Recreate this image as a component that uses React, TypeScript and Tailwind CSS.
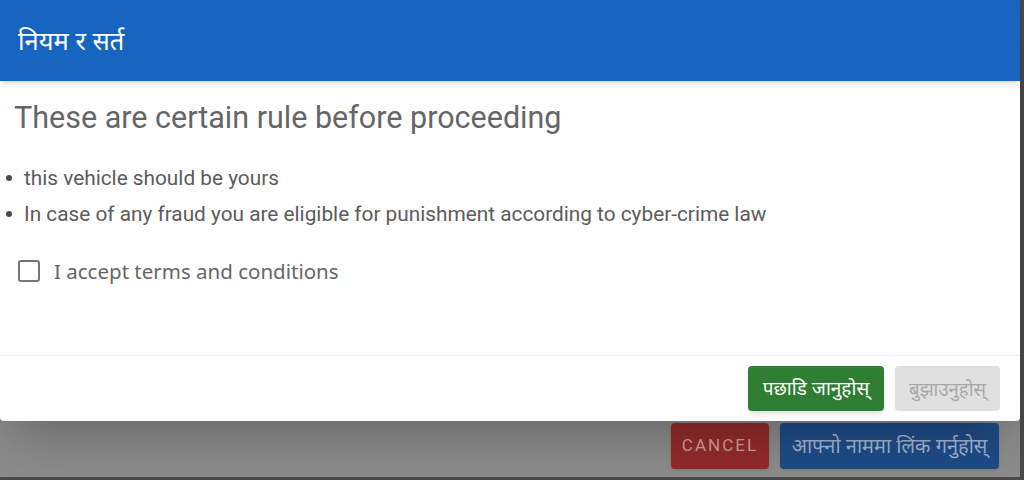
import { useState } from "react";

const rules = [
  "this vehicle should be yours",
  "In case of any fraud you are eligible for punishment according to cyber-crime law",
];

export default function App() {
  const [accepted, setAccepted] = useState(false);

  return (
    <div className="relative flex h-[480px] w-[1024px] overflow-hidden bg-[#4a4a4a] font-['Roboto',sans-serif]">
      <div className="relative flex h-[477px] w-[1020px] flex-col justify-end bg-gradient-to-b from-[#6a6a6a] via-[#828282] to-[#8c8c8c]">
        {/* page behind the overlay */}
        <div className="flex justify-end gap-[11px] pb-[8px] pr-[21px]">
          <button
            type="button"
            className="flex h-[46px] w-[98px] items-center justify-center rounded-[4px] bg-[#922a2a] text-[17px] tracking-[0.12em] text-[#d49a9a] shadow"
          >
            CANCEL
          </button>
          <button
            type="button"
            className="flex h-[46px] w-[219px] items-center justify-center rounded-[4px] bg-[#1e4b86] font-['Noto_Sans',sans-serif] text-[20px] text-[#9fb3cf] shadow"
          >
            आफ्नो नाममा लिंक गर्नुहोस्
          </button>
        </div>

        {/* dialog */}
        <div className="absolute left-0 top-0 flex h-[421px] w-[1020px] flex-col rounded-b-[4px] bg-white shadow-2xl">
          <div className="relative z-10 flex h-[81px] items-center bg-[#1565c0] pl-[18px] shadow-md">
            <h2 className="font-['Noto_Sans',sans-serif] text-[25.5px] text-white">
              नियम र सर्त
            </h2>
          </div>

          <div className="flex-1 px-[14px] pt-[19px]">
            <h1 className="text-[30.5px] leading-[36px] text-[#666666]">
              These are certain rule before proceeding
            </h1>
            <ul className="mt-[30px] flex flex-col gap-[12px]">
              {rules.map((r) => (
                <li
                  key={r}
                  className="flex items-center text-[20.8px] leading-[24px] text-[#5c5c5c]"
                >
                  <span className="-ml-[8px] mr-[12px] h-[6px] w-[6px] rounded-full bg-[#4a4a4a]" />
                  {r}
                </li>
              ))}
            </ul>
            <label className="ml-[4px] mt-[30px] flex cursor-pointer items-center gap-[14px]">
              <span
                onClick={() => setAccepted(!accepted)}
                className={`h-[22px] w-[22px] rounded-[3px] border-2 ${
                  accepted ? "border-[#1565c0] bg-[#1565c0]" : "border-[#767676]"
                }`}
              />
              <span className="font-['Noto_Sans',sans-serif] text-[20.5px] text-[#666666]">
                I accept terms and conditions
              </span>
            </label>
          </div>

          <div className="flex h-[66px] items-start justify-end gap-[11px] border-t border-[#eeeeee] pr-[20px] pt-[10px]">
            <button
              type="button"
              className="flex h-[45px] w-[136px] items-center justify-center rounded-[4px] bg-[#2e7d32] font-['Noto_Sans',sans-serif] text-[19px] text-white shadow-md"
            >
              पछाडि जानुहोस्
            </button>
            <button
              type="button"
              disabled={!accepted}
              className="flex h-[45px] w-[105px] items-center justify-center rounded-[4px] bg-[#e0e0e0] font-['Noto_Sans',sans-serif] text-[18.5px] text-[#a8a8a8]"
            >
              बुझाउनुहोस्
            </button>
          </div>
        </div>
      </div>
    </div>
  );
}
